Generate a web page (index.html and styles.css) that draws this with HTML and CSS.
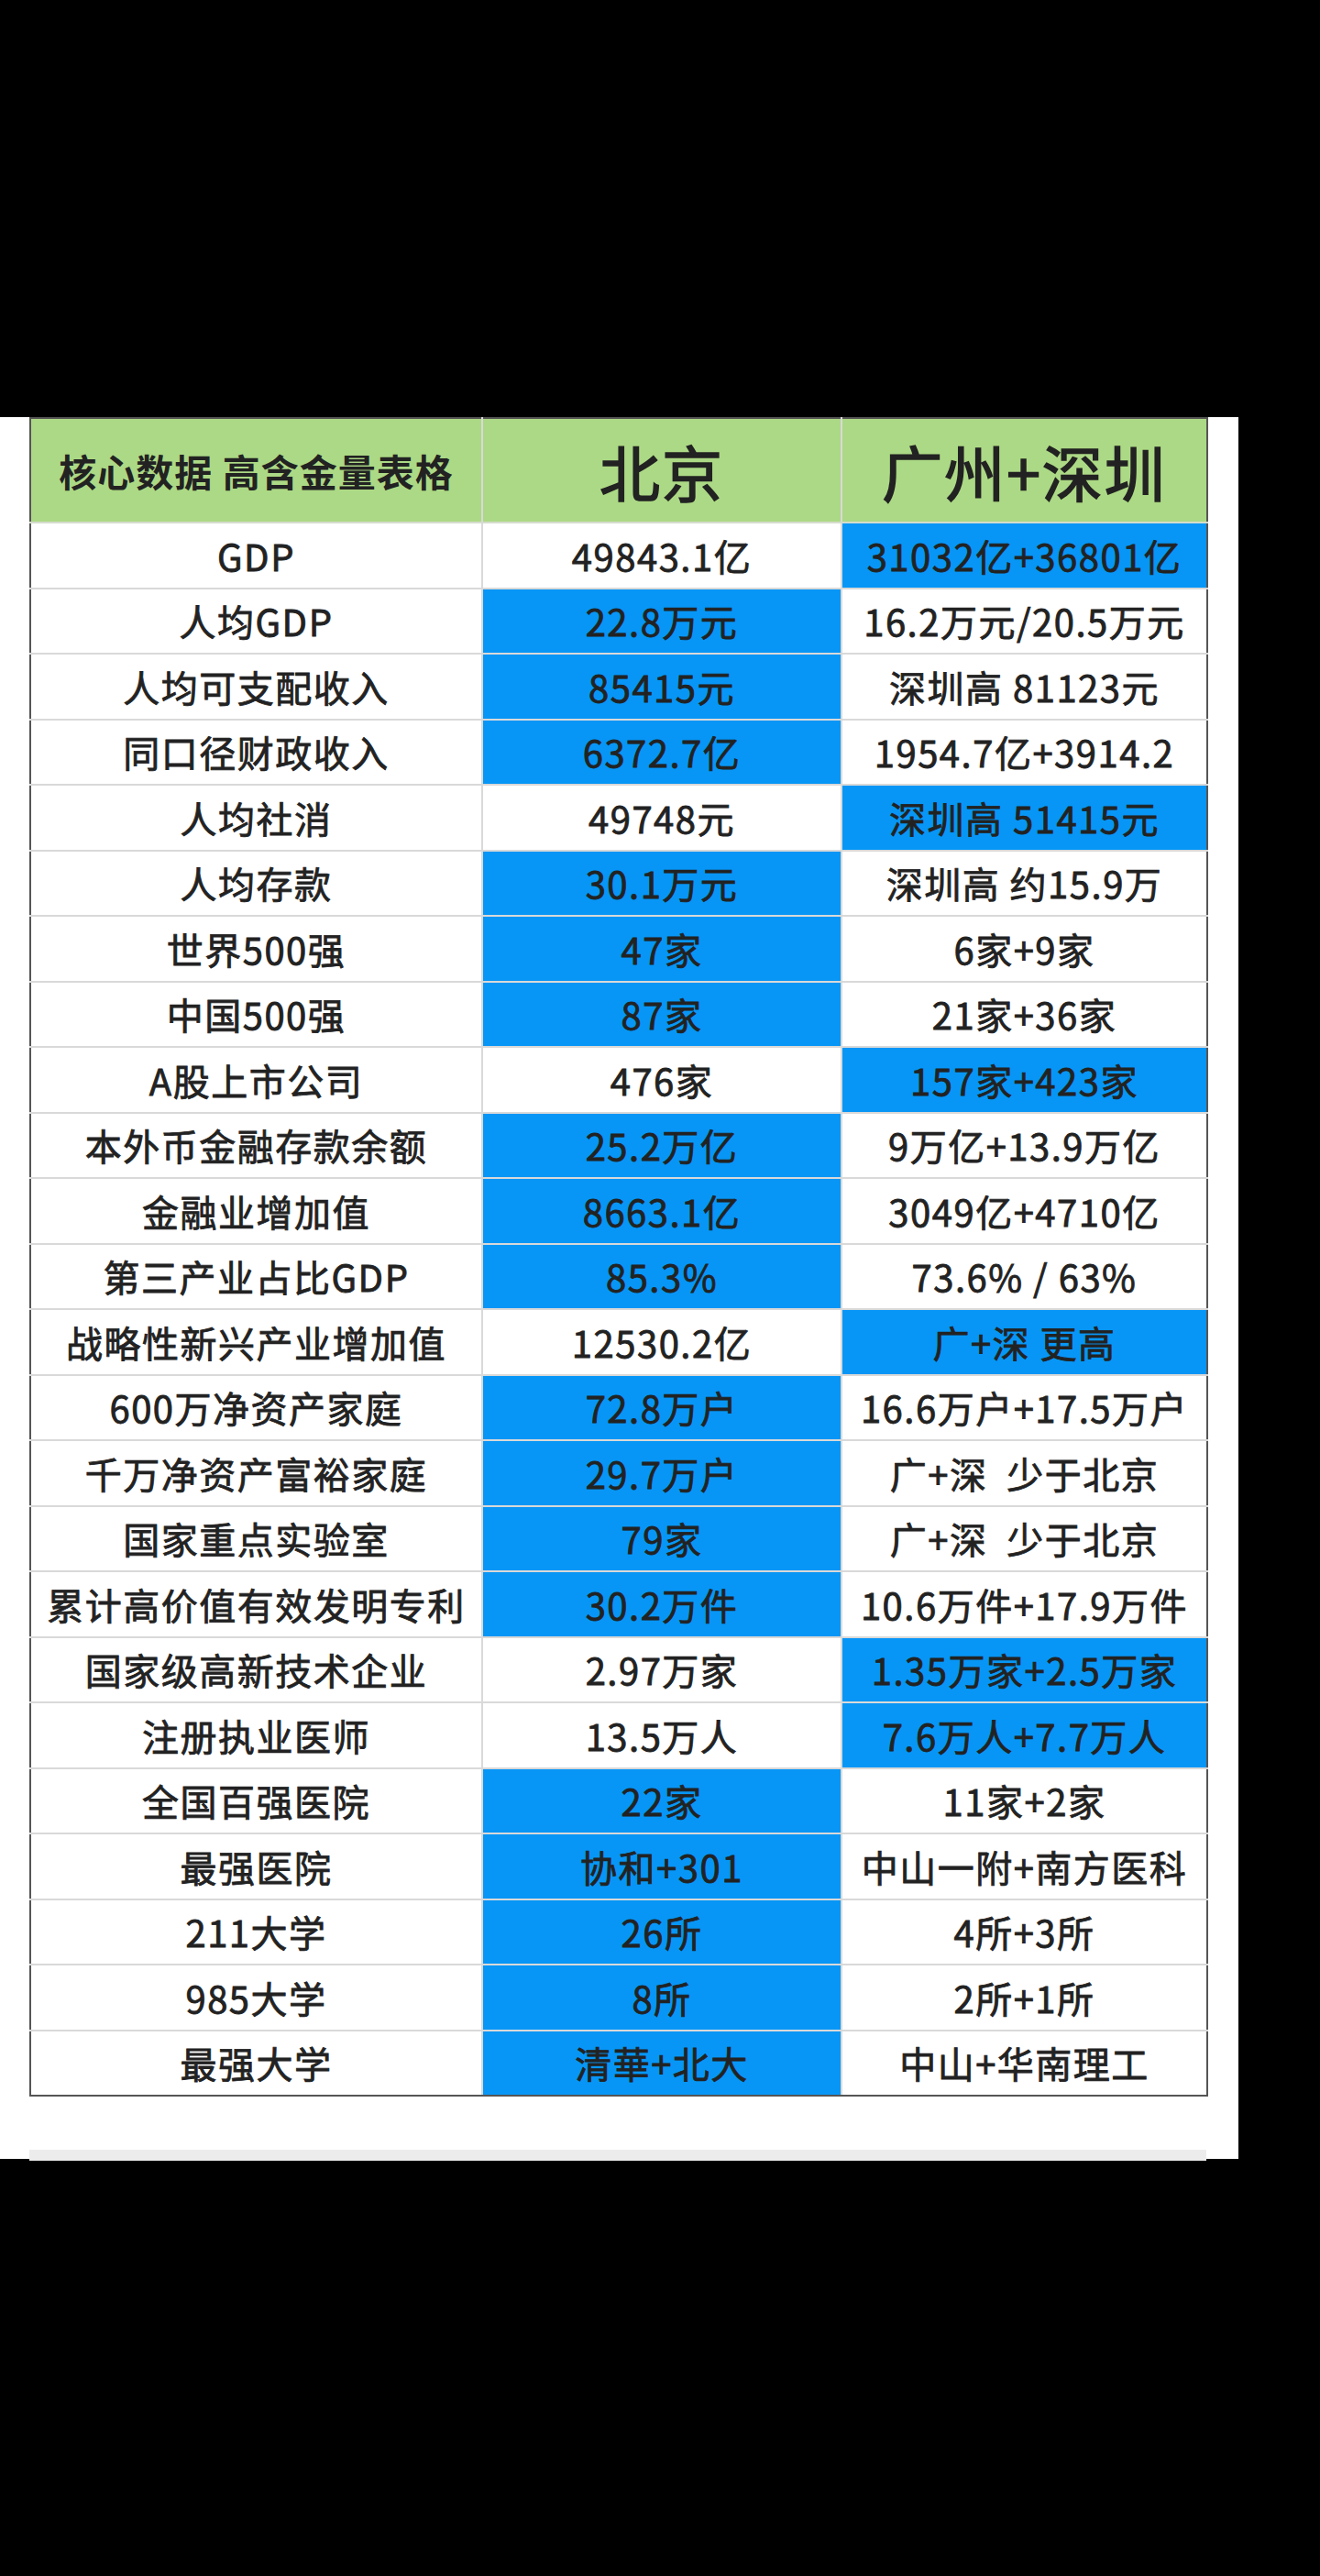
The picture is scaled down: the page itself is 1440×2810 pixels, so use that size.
FILE: index.html
```html
<!DOCTYPE html>
<html lang="zh-CN">
<head>
<meta charset="utf-8">
<title>核心数据 高含金量表格</title>
<link rel="stylesheet" href="styles.css">
</head>
<body>
<div class="top"></div>
<div class="panel">
  <table class="data">
    <colgroup>
      <col class="c1"><col class="c2"><col class="c3">
    </colgroup>
    <thead>
      <tr class="head">
        <th class="h1">核心数据 高含金量表格</th>
        <th class="h2">北京</th>
        <th class="h2">广州+深圳</th>
      </tr>
    </thead>
    <tbody>
      <tr><td>GDP</td><td>49843.1亿</td><td class="hl">31032亿+36801亿</td></tr>
      <tr><td>人均GDP</td><td class="hl">22.8万元</td><td>16.2万元/20.5万元</td></tr>
      <tr><td>人均可支配收入</td><td class="hl">85415元</td><td>深圳高 81123元</td></tr>
      <tr><td>同口径财政收入</td><td class="hl">6372.7亿</td><td>1954.7亿+3914.2</td></tr>
      <tr><td>人均社消</td><td>49748元</td><td class="hl">深圳高 51415元</td></tr>
      <tr><td>人均存款</td><td class="hl">30.1万元</td><td>深圳高 约15.9万</td></tr>
      <tr><td>世界500强</td><td class="hl">47家</td><td>6家+9家</td></tr>
      <tr><td>中国500强</td><td class="hl">87家</td><td>21家+36家</td></tr>
      <tr><td>A股上市公司</td><td>476家</td><td class="hl">157家+423家</td></tr>
      <tr><td>本外币金融存款余额</td><td class="hl">25.2万亿</td><td>9万亿+13.9万亿</td></tr>
      <tr><td>金融业增加值</td><td class="hl">8663.1亿</td><td>3049亿+4710亿</td></tr>
      <tr><td>第三产业占比GDP</td><td class="hl">85.3%</td><td>73.6% / 63%</td></tr>
      <tr><td>战略性新兴产业增加值</td><td>12530.2亿</td><td class="hl">广+深 更高</td></tr>
      <tr><td>600万净资产家庭</td><td class="hl">72.8万户</td><td>16.6万户+17.5万户</td></tr>
      <tr><td>千万净资产富裕家庭</td><td class="hl">29.7万户</td><td>广+深&nbsp; 少于北京</td></tr>
      <tr><td>国家重点实验室</td><td class="hl">79家</td><td>广+深&nbsp; 少于北京</td></tr>
      <tr><td>累计高价值有效发明专利</td><td class="hl">30.2万件</td><td>10.6万件+17.9万件</td></tr>
      <tr><td>国家级高新技术企业</td><td>2.97万家</td><td class="hl">1.35万家+2.5万家</td></tr>
      <tr><td>注册执业医师</td><td>13.5万人</td><td class="hl">7.6万人+7.7万人</td></tr>
      <tr><td>全国百强医院</td><td class="hl">22家</td><td>11家+2家</td></tr>
      <tr><td>最强医院</td><td class="hl">协和+301</td><td>中山一附+南方医科</td></tr>
      <tr><td>211大学</td><td class="hl">26所</td><td>4所+3所</td></tr>
      <tr><td>985大学</td><td class="hl">8所</td><td>2所+1所</td></tr>
      <tr><td>最强大学</td><td class="hl">清華+北大</td><td>中山+华南理工</td></tr>
    </tbody>
  </table>
  <div class="next"></div>
</div>
</body>
</html>
```
FILE: styles.css
```css
html, body {
  margin: 0;
  padding: 0;
}
body {
  background: #000;
  min-height: 2810px;
  font-family: "Noto Sans CJK SC", "Noto Sans", sans-serif;
  color: #222;
}
.top {
  height: 455px;
}
.panel {
  width: 1351px;
  height: 1900px;
  background: #fff;
  padding: 0 35px 0 32px;
  box-sizing: border-box;
}
.data {
  width: 1284px;
  border-collapse: collapse;
  table-layout: fixed;
  border: 2px solid #555;
}
.c1 { width: 493px; }
.c2 { width: 392px; }
.c3 { width: 399px; }
.data th,
.data td {
  border: 2px solid #d9d9d9;
  padding: 0;
  text-align: center;
  vertical-align: middle;
  white-space: nowrap;
  overflow: hidden;
}
.head th {
  background: #acd985;
  border-top: 2px solid #555;
  border-bottom-color: #d4dccd;
  height: 112px;
  color: #222;
}
.h1 {
  font-size: 41px;
  font-weight: 700;
  letter-spacing: 1px;
}
.h2 {
  font-size: 66px;
  font-weight: 400;
  -webkit-text-stroke: 1.6px #222;
  letter-spacing: 2px;
}
.data td {
  height: 69.5px;
  font-size: 40px;
  font-weight: 400;
  -webkit-text-stroke: 0.8px #222;
  letter-spacing: 1.5px;
  line-height: 1;
  background: #fff;
}
.data td.hl {
  background: #0796f6;
}
.data tr > :first-child { border-left: 2px solid #555; }
.data tr > :last-child { border-right: 2px solid #555; }
.data tbody tr:last-child td { border-bottom: 2px solid #555; }
.next {
  margin-top: 58px;
  width: 1284px;
  height: 12px;
  background: #ececec;
}
```
